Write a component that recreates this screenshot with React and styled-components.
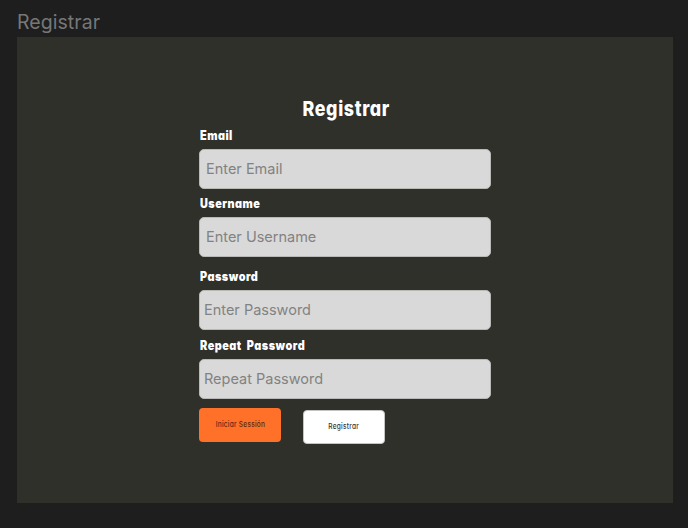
import React from "react";
import styled, { createGlobalStyle } from "styled-components";

const GlobalStyle = createGlobalStyle`
  * { box-sizing: border-box; }
  body { margin: 0; background: #1e1e1e; }
`;

const Canvas = styled.main`
  width: 688px;
  height: 528px;
  padding: 9px 0 0 17px;
  overflow: hidden;
  background: #1e1e1e;
  font-family: Inter, sans-serif;
`;

const FrameName = styled.div`
  height: 28px;
  color: #777;
  font-size: 19.5px;
  line-height: 27px;
  letter-spacing: 0.05px;
`;

const Frame = styled.section`
  width: 655.5px;
  height: 465.5px;
  padding: 58px 0 0 182px;
  background: #30302b;
`;

const Form = styled.form`
  display: flex;
  flex-direction: column;
  width: 292px;
`;

const Display = styled.span`
  display: inline-block;
  font-feature-settings: "cv11";
  white-space: nowrap;
  transform: scaleX(0.87);
  transform-origin: ${(p) => p.$origin || "left"} center;
`;

const Title = styled.h1`
  margin: 0;
  height: 29px;
  color: #fff;
  font-size: 20.5px;
  font-weight: 800;
  line-height: 28px;
  letter-spacing: 0.75px;
  text-align: center;
  text-indent: 1px;
`;

const Field = styled.label`
  display: block;
  height: ${(p) => p.$height}px;
`;

const Label = styled.span`
  display: block;
  height: 25px;
  padding-left: 0.5px;
  color: #fff;
  font-size: 12.5px;
  font-weight: 900;
  line-height: 23px;
  letter-spacing: 0.55px;
  word-spacing: 3px;
`;

const Input = styled.input`
  display: block;
  width: 292px;
  height: 40px;
  padding: 0 0 1px ${(p) => p.$inset}px;
  border: 1px solid #b9b9b7;
  border-radius: 5px;
  outline: 0;
  background: #d9d9d9;
  font: 400 14.5px Inter, sans-serif;
  &::placeholder { color: #828282; opacity: 1; }
`;

const Actions = styled.div`
  display: flex;
  align-items: flex-start;
  gap: 21.5px;
`;

const Button = styled.button`
  width: 82px;
  height: 34px;
  margin-top: ${(p) => (p.$primary ? 0 : 1.5)}px;
  padding: 0 0 1px 1px;
  border: ${(p) => (p.$primary ? "0" : "1px solid #c4c4c2")};
  border-radius: 4px;
  background: ${(p) => (p.$primary ? "#ff7029" : "#fff")};
  color: ${(p) => (p.$primary ? "#5a2a12" : "#333")};
  font: 500 7.5px Inter, sans-serif;
  letter-spacing: 0.3px;
`;

const fields = [
  { label: "Email", hint: "Enter Email", inset: 6, height: 68 },
  { label: "Username", hint: "Enter Username", inset: 6, height: 73.25 },
  { label: "Password", hint: "Enter Password", inset: 4, height: 68.5, type: "password" },
  { label: "Repeat Password", hint: "Repeat Password", inset: 4, height: 74.5, type: "password" },
];

export default function App() {
  return (
    <>
      <GlobalStyle />
      <Canvas>
        <FrameName>Registrar</FrameName>
        <Frame>
          <Form>
            <Title><Display $origin="center">Registrar</Display></Title>
            {fields.map((f) => (
              <Field key={f.label} $height={f.height}>
                <Label><Display>{f.label}</Display></Label>
                <Input type={f.type || "text"} placeholder={f.hint} $inset={f.inset} />
              </Field>
            ))}
            <Actions>
              <Button type="button" $primary><Display $origin="center">Iniciar Sessión</Display></Button>
              <Button type="button"><Display $origin="center">Registrar</Display></Button>
            </Actions>
          </Form>
        </Frame>
      </Canvas>
    </>
  );
}
